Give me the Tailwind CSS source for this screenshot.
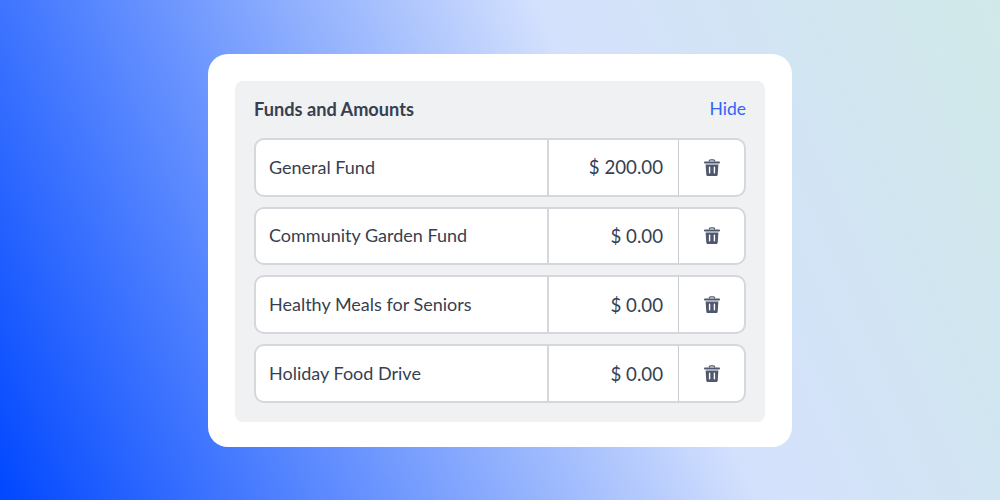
<!DOCTYPE html>
<html>
<head>
<meta charset="utf-8">
<script src="https://cdn.jsdelivr.net/npm/@tailwindcss/browser@4"></script>
</head>
<body class="m-0">
<div class="w-[1000px] h-[500px] overflow-hidden flex items-start justify-center pt-[54px] bg-[linear-gradient(66deg,#0047ff_0%,#d4e1fd_62%,#d0e9e8_100%)] font-['Lato','Liberation_Sans',sans-serif] text-[#373f51]">
  <div class="w-[584px] h-[393px] bg-white rounded-[20px] p-[27px]">
    <div class="h-[341px] bg-[#f0f1f3] rounded-lg px-[19px] pt-[19px] flex flex-col">
      <div class="flex items-center justify-between h-[19px] mb-[19px]">
        <span class="text-[18.2px] font-bold">Funds and Amounts</span>
        <span class="text-[17.5px] text-[#2f66f6]">Hide</span>
      </div>
      <div class="flex flex-col gap-[10px]">
        <div class="h-[58.67px] flex bg-white border-2 border-[#d5d7dd] rounded-[10px] text-[18px]">
          <div class="w-[291px] flex items-center pl-[13px]">General Fund</div>
          <div class="w-[132px] flex items-center justify-end pr-[15px] text-[18.7px] border-l-2 border-r border-l-[#d5d7dd] border-r-[#c9cbd3]">$ 200.00</div>
          <div class="flex-1 flex items-center justify-center"><svg class="w-[16px] h-[17px]" viewBox="0 0 16 17"><path d="M5.4 2.6V2c0-.7.5-1.2 1.2-1.2h2.8c.7 0 1.2.5 1.2 1.2v.6" fill="none" stroke="#50586f" stroke-width="1.3"/><path d="M.9 2.6h14.2a.9.9 0 0 1 0 1.8H.9a.9.9 0 0 1 0-1.8Z" fill="#50586f"/><path fill-rule="evenodd" fill="#50586f" d="M1.6 5.4h12.8l-.7 10c-.1.9-.8 1.6-1.7 1.6H4c-.9 0-1.6-.7-1.7-1.6l-.7-10Zm4 2.2c-.4 0-.7.3-.7.7v5.4c0 .4.3.7.7.7s.7-.3.7-.7V8.300c0-.4-.3-.7-.7-.7Zm4.800 0c-.4 0-.7.3-.7.7v5.4c0 .4.3.7.7.7s.7-.3.7-.7V8.300c0-.4-.3-.7-.7-.7Z"/></svg></div>
        </div>
        <div class="h-[58.67px] flex bg-white border-2 border-[#d5d7dd] rounded-[10px] text-[18px]">
          <div class="w-[291px] flex items-center pl-[13px]">Community Garden Fund</div>
          <div class="w-[132px] flex items-center justify-end pr-[15px] text-[18.7px] border-l-2 border-r border-l-[#d5d7dd] border-r-[#c9cbd3]">$ 0.00</div>
          <div class="flex-1 flex items-center justify-center"><svg class="w-[16px] h-[17px]" viewBox="0 0 16 17"><path d="M5.4 2.6V2c0-.7.5-1.2 1.2-1.2h2.8c.7 0 1.2.5 1.2 1.2v.6" fill="none" stroke="#50586f" stroke-width="1.3"/><path d="M.9 2.6h14.2a.9.9 0 0 1 0 1.8H.9a.9.9 0 0 1 0-1.8Z" fill="#50586f"/><path fill-rule="evenodd" fill="#50586f" d="M1.6 5.4h12.8l-.7 10c-.1.9-.8 1.6-1.7 1.6H4c-.9 0-1.6-.7-1.7-1.6l-.7-10Zm4 2.2c-.4 0-.7.3-.7.7v5.4c0 .4.3.7.7.7s.7-.3.7-.7V8.300c0-.4-.3-.7-.7-.7Zm4.800 0c-.4 0-.7.3-.7.7v5.4c0 .4.3.7.7.7s.7-.3.7-.7V8.300c0-.4-.3-.7-.7-.7Z"/></svg></div>
        </div>
        <div class="h-[58.67px] flex bg-white border-2 border-[#d5d7dd] rounded-[10px] text-[18px]">
          <div class="w-[291px] flex items-center pl-[13px]">Healthy Meals for Seniors</div>
          <div class="w-[132px] flex items-center justify-end pr-[15px] text-[18.7px] border-l-2 border-r border-l-[#d5d7dd] border-r-[#c9cbd3]">$ 0.00</div>
          <div class="flex-1 flex items-center justify-center"><svg class="w-[16px] h-[17px]" viewBox="0 0 16 17"><path d="M5.4 2.6V2c0-.7.5-1.2 1.2-1.2h2.8c.7 0 1.2.5 1.2 1.2v.6" fill="none" stroke="#50586f" stroke-width="1.3"/><path d="M.9 2.6h14.2a.9.9 0 0 1 0 1.8H.9a.9.9 0 0 1 0-1.8Z" fill="#50586f"/><path fill-rule="evenodd" fill="#50586f" d="M1.6 5.4h12.8l-.7 10c-.1.9-.8 1.6-1.7 1.6H4c-.9 0-1.6-.7-1.7-1.6l-.7-10Zm4 2.2c-.4 0-.7.3-.7.7v5.4c0 .4.3.7.7.7s.7-.3.7-.7V8.300c0-.4-.3-.7-.7-.7Zm4.800 0c-.4 0-.7.3-.7.7v5.4c0 .4.3.7.7.7s.7-.3.7-.7V8.300c0-.4-.3-.7-.7-.7Z"/></svg></div>
        </div>
        <div class="h-[58.67px] flex bg-white border-2 border-[#d5d7dd] rounded-[10px] text-[18px]">
          <div class="w-[291px] flex items-center pl-[13px] pt-[1px]">Holiday Food Drive</div>
          <div class="w-[132px] flex items-center justify-end pr-[15px] pt-[1px] text-[18.7px] border-l-2 border-r border-l-[#d5d7dd] border-r-[#c9cbd3]">$ 0.00</div>
          <div class="flex-1 flex items-center justify-center"><svg class="w-[16px] h-[17px]" viewBox="0 0 16 17"><path d="M5.4 2.6V2c0-.7.5-1.2 1.2-1.2h2.8c.7 0 1.2.5 1.2 1.2v.6" fill="none" stroke="#50586f" stroke-width="1.3"/><path d="M.9 2.6h14.2a.9.9 0 0 1 0 1.8H.9a.9.9 0 0 1 0-1.8Z" fill="#50586f"/><path fill-rule="evenodd" fill="#50586f" d="M1.6 5.4h12.8l-.7 10c-.1.9-.8 1.6-1.7 1.6H4c-.9 0-1.6-.7-1.7-1.6l-.7-10Zm4 2.2c-.4 0-.7.3-.7.7v5.4c0 .4.3.7.7.7s.7-.3.7-.7V8.300c0-.4-.3-.7-.7-.7Zm4.800 0c-.4 0-.7.3-.7.7v5.4c0 .4.3.7.7.7s.7-.3.7-.7V8.300c0-.4-.3-.7-.7-.7Z"/></svg></div>
        </div>
      </div>
    </div>
  </div>
</div>
</body>
</html>
